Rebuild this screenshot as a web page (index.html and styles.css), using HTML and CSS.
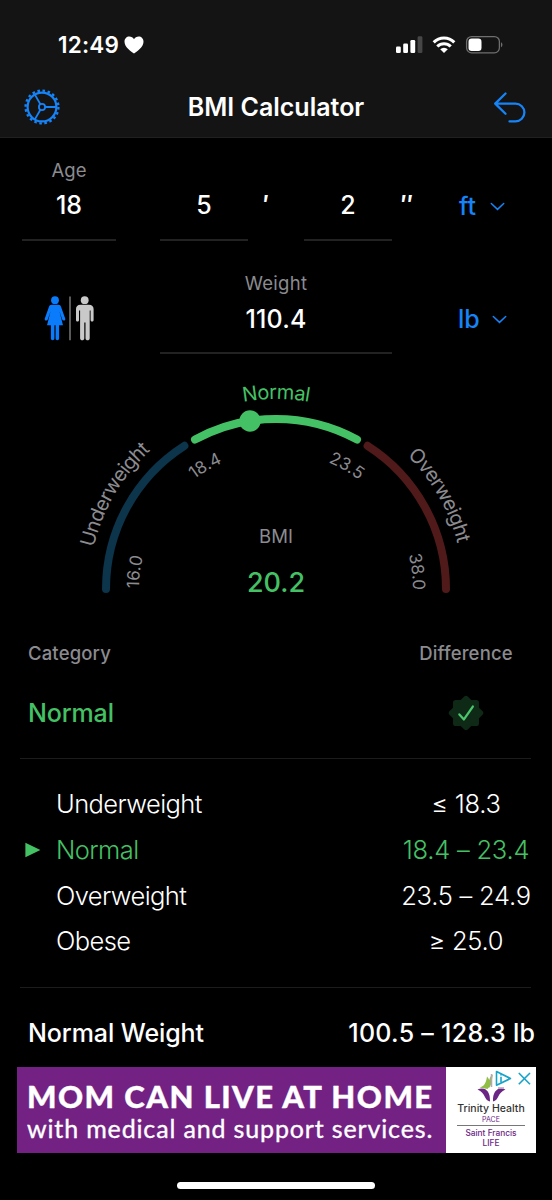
FILE: index.html
```html
<!DOCTYPE html>
<html lang="en">
<head>
<meta charset="utf-8">
<title>BMI Calculator</title>
<link rel="stylesheet" href="styles.css">
</head>
<body>
<div class="screen">
  <header class="header">
    <div class="status">
      <div class="status-left">
        <span class="time">12:49</span>
        <svg class="heart" width="20" height="18" viewBox="0 0 20 18"><path fill="#fff" d="M10 17.6C7.500 15.700 .5 11.300 .5 5.800C.5 2.600 2.700.6 5.300.6C7.300.6 9 1.600 10 3.300C11 1.600 12.700.6 14.700.6C17.300.6 19.500 2.600 19.500 5.800C19.500 11.300 12.500 15.700 10 17.600Z"/></svg>
      </div>
      <svg class="signals" width="110" height="20" viewBox="0 0 110 20">
        <g fill="#fff">
          <rect x="1" y="11.500" width="4.800" height="6.500" rx="1.300"/>
          <rect x="8.200" y="8.500" width="4.800" height="9.500" rx="1.300"/>
          <rect x="15.400" y="5" width="4.800" height="13" rx="1.300"/>
        </g>
        <rect x="22.600" y="1.300" width="4.800" height="16.700" rx="1.300" fill="#464646"/>
        <g fill="none" stroke="#fff" stroke-width="3.100">
          <path d="M38.700 7.300A14.500 14.500 0 0 1 59.300 7.300"/>
          <path d="M42.300 11.500A9.500 9.500 0 0 1 55.700 11.500"/>
        </g>
        <path fill="#fff" d="M49 18L45.200 14.200A5.400 5.400 0 0 1 52.800 14.200Z"/>
        <rect x="71.600" y="1.600" width="32.800" height="16.200" rx="5" fill="none" stroke="#6f6f6f" stroke-width="1.300"/>
        <rect x="73.500" y="3.500" width="13" height="12.500" rx="3.200" fill="#fff"/>
        <path fill="#6f6f6f" d="M106 7.200C107.900 8 107.900 11.400 106 12.200Z"/>
      </svg>
    </div>
    <div class="nav">
      <svg class="gear" width="36" height="36" viewBox="-18 -18 36 36">
        <g fill="none" stroke="#1683f7">
          <circle r="16.400" stroke-width="2.400" stroke-dasharray="2.576 2.576"/>
          <circle r="14.400" stroke-width="2.200"/>
          <circle r="3.100" stroke-width="1.800"/>
          <path stroke-width="1.800" d="M3.200 0H14M-1.600-2.800L-7-12.100M-1.600 2.800L-7 12.100"/>
        </g>
      </svg>
      <h1 class="title">BMI Calculator</h1>
      <svg class="undo" width="34" height="34" viewBox="0 0 34 34"><path fill="none" stroke="#1683f7" stroke-width="2.300" stroke-linecap="round" stroke-linejoin="round" d="M13.500 3.500L3.200 13.600L13.500 23.700M3.200 13.600H23.500A8.900 8.900 0 0 1 23.500 31.400H17.500"/></svg>
    </div>
  </header>

  <section class="height-row">
    <div class="field age"><span class="label">Age</span><span class="value">18</span></div>
    <div class="field feet"><span class="label"></span><span class="value">5</span></div>
    <span class="mark mark-feet">′</span>
    <div class="field inches"><span class="label"></span><span class="value">2</span></div>
    <span class="mark mark-inches">″</span>
    <div class="unit"><span class="unit-ft">ft</span><svg width="15" height="9" viewBox="0 0 15 9"><path d="M1.300 1.500L7.500 7.400L13.700 1.500"/></svg></div>
  </section>

  <section class="weight-row">
    <svg class="people" width="52" height="46" viewBox="0 0 52 46">
      <g fill="#0a7bfa">
        <circle cx="11" cy="4.200" r="3.900"/>
        <path d="M7.600 8.800H14.400C15.900 8.800 16.700 9.700 17.100 11L21.300 22.700C21.700 24.700 19 25.400 18.200 23.500L15.500 15.500L19 29.300H15.100V42.600C15.100 44.700 11.600 44.700 11.600 42.600V29.300H10.400V42.600C10.400 44.700 6.900 44.700 6.900 42.600V29.300H3L6.500 15.500L3.800 23.500C3 25.400.3 24.700.7 22.700L4.900 11C5.300 9.700 6.100 8.800 7.600 8.800Z"/>
      </g>
      <path stroke="#777" stroke-width="1.500" d="M26 .5V44.200"/>
      <g fill="#c9c9c9" transform="translate(-.6 0)">
        <circle cx="41.300" cy="4.200" r="3.900"/>
        <path d="M37 8.800H45.600C48.500 8.800 50.200 10.400 50.200 13V24C50.200 26 47.200 26 47.200 24V14.600H46.300V42.300C46.300 45 42.100 45 42.100 42.300V26.500H40.900V42.300C40.900 45 36.700 45 36.700 42.300V14.600H35.600V24C35.600 26 32.600 26 32.600 24V13C32.600 10.400 34.200 8.800 37 8.800Z"/>
      </g>
    </svg>
    <div class="field weight"><span class="label label-weight">Weight</span><span class="value value-weight">110.4</span></div>
    <div class="unit unit-weight"><span>lb</span><svg width="15" height="9" viewBox="0 0 15 9"><path d="M1.300 1.500L7.500 7.400L13.700 1.500"/></svg></div>
  </section>

  <svg class="gauge" width="552" height="246" viewBox="0 370 552 246">
    <defs>
      <path id="outer" d="M89 589A187 187 0 0 1 463 589"/>
      <path id="top" d="M86 589A190 190 0 0 1 466 589"/>
      <path id="inner" d="M139 589A137 137 0 0 1 413 589"/>
    </defs>
    <g class="arcs">
      <path stroke="#0c344b" d="M106 589A170 170 0 0 1 184.400 445.800"/>
      <path stroke="#501a1a" d="M367.600 445.800A170 170 0 0 1 446 589"/>
      <path stroke="#45c165" d="M195 439.500A170 170 0 0 1 357 439.500"/>
    </g>
    <circle cx="250" cy="421" r="10.700" fill="#45c165"/>
    <g class="band">
      <text class="band-side"><textPath href="#outer" startOffset="16.800%">Underweight</textPath></text>
      <text class="band-normal"><textPath href="#top" startOffset="50%">Normal</textPath></text>
      <text class="band-side"><textPath href="#outer" startOffset="83.400%">Overweight</textPath></text>
    </g>
    <g class="ticks">
      <text><textPath href="#inner" startOffset="3.900%">16.0</textPath></text>
      <text><textPath href="#inner" startOffset="33.400%">18.4</textPath></text>
      <text><textPath href="#inner" startOffset="66.600%">23.5</textPath></text>
      <text><textPath href="#inner" startOffset="96.100%">38.0</textPath></text>
    </g>
    <text class="bmi-label" x="276" y="543.300">BMI</text>
    <text class="bmi-value" x="276" y="592">20.2</text>
  </svg>

  <section class="result">
    <div class="result-row heads"><span class="cat-head">Category</span><span class="right diff-head">Difference</span></div>
    <div class="result-row verdict"><span>Normal</span>
      <span class="right"><svg width="36" height="36" viewBox="-19 -19 38 38">
        <g fill="#0f2917"><rect x="-13.700" y="-13.700" width="27.400" height="27.400" rx="3"/><rect x="-13.700" y="-13.700" width="27.400" height="27.400" rx="3" transform="rotate(45)"/></g>
        <path fill="none" stroke="#4ac66b" stroke-width="2.400" stroke-linecap="round" stroke-linejoin="round" d="M-7 1.500L-2.200 6.800L7.200-6.800"/>
      </svg></span>
    </div>
  </section>

  <ul class="ranges">
    <li><span class="name r-under">Underweight</span><span class="right">≤ 18.3</span></li>
    <li class="current"><svg class="pointer" width="16" height="16" viewBox="0 0 16 16"><path d="M.4.8L15.400 8L.4 15.200Z"/></svg><span class="name">Normal</span><span class="right">18.4 – 23.4</span></li>
    <li><span class="name">Overweight</span><span class="right">23.5 – 24.9</span></li>
    <li><span class="name">Obese</span><span class="right">≥ 25.0</span></li>
  </ul>

  <section class="normal-weight"><span class="nw-name">Normal Weight</span><span class="nw-value">100.5 – 128.3 lb</span></section>

  <aside class="ad">
    <div class="ad-copy">
      <div class="ad-title">MOM CAN LIVE AT HOME</div>
      <div class="ad-sub">with medical and support services.</div>
    </div>
    <div class="ad-brand">
      <svg width="90" height="36" viewBox="0 0 90 36">
        <path fill="#8fbd45" d="M43 21C42.500 14 43.500 9 47 7.500C45.500 12 46.500 17 43 21ZM33.500 20.500C38 19.500 40 16.500 41 9.500C45 14 45 19 41.500 22Z"/>
        <path fill="#6b2585" d="M31.500 22.500C39 19.500 44.500 24 44 34.500C38 33.500 40 26 31.500 22.500ZM59.500 22.500C52 19.500 46.500 24 47 34.500C53 33.500 51 26 59.500 22.500Z"/>
        <path fill="none" stroke="#b6a5bd" stroke-width="1.500" d="M45.500 7V20M52 21H58"/>
        <g fill="#fff" stroke="#15a3cb" stroke-width="1.600" stroke-linejoin="round">
          <path d="M50.500 4.500V18.300L64.500 11.500Z"/>
          <path d="M55 9.800V15.500M55 7.300V8.500M72.800 6L84 17.200M84 6L72.800 17.200"/>
        </g>
      </svg>
      <div class="brand-name">Trinity Health</div>
      <div class="brand-pace">PACE</div>
      <div class="brand-rule"></div>
      <div class="brand-sub">Saint Francis</div>
      <div class="brand-sub brand-life">LIFE</div>
    </div>
  </aside>
  <div class="home-bar"></div>
</div>
</body>
</html>
```
FILE: styles.css
```css
* { box-sizing: border-box; }
body { margin: 0; background: #000; }
svg { display: block; flex: none; }
.screen {
  width: 552px; height: 1200px; background: #000; color: #fff;
  font-family: Inter, "Liberation Sans", sans-serif;
  font-size: 25px; white-space: nowrap; overflow: hidden;
  display: flex; flex-direction: column;
}
.header { height: 138px; flex: none; background: #141414; border-bottom: 1px solid #202020; padding-top: 30px; }
.status { height: 30px; display: flex; align-items: center; justify-content: space-between; padding: 0 47px 0 58px; }
.status-left { display: flex; align-items: center; gap: 5px; }
.time { font-size: 22.500px; font-weight: 600; line-height: 30px; letter-spacing: 0.200px; }
.nav { height: 94px; display: flex; align-items: center; justify-content: space-between; padding: 0 26px 0 24px; }
.title { margin: 0; font-size: 25px; font-weight: 600; line-height: 30px; letter-spacing: 0; }

.height-row { height: 103px; flex: none; display: flex; padding: 17px 0 0 22px; }
.field { display: flex; flex-direction: column; align-items: center; height: 86px; border-bottom: 2px solid #222; }
.label { height: 30px; line-height: 30px; font-size: 18.500px; color: #8b8b90; }
.label-weight { letter-spacing: 0.250px; }
.value { height: 40px; line-height: 40px; font-weight: 500; }
.value-weight { line-height: 42px; letter-spacing: 0.200px; }
.age { width: 94px; }
.feet { width: 88px; margin-left: 44px; }
.inches { width: 88px; margin-left: 20px; }
.mark { line-height: 40px; padding-top: 30px; text-align: center; font-weight: 600; }
.mark-feet { width: 36px; }
.mark-inches { width: 30px; }
.unit { display: flex; align-items: center; gap: 14px; height: 40px; margin: 31px 0 0 37px; color: #1683f7; font-weight: 500; }
.unit path { fill: none; stroke: #1683f7; stroke-width: 1.500; stroke-linecap: round; }

.weight-row { height: 129px; flex: none; display: flex; padding: 27px 0 0 44px; }
.people { margin-top: 28px; }
.weight { width: 232px; margin-left: 64px; }
.unit-weight { margin-left: 66px; gap: 12px; }

.gauge { font-family: Inter, sans-serif; }
.gauge text { text-anchor: middle; }
.arcs path { fill: none; stroke-width: 8; stroke-linecap: round; }
.band { font-size: 20px; letter-spacing: -0.450px; fill: #8b8b90; }
.band-side { letter-spacing: -0.700px; }
.band .band-normal { fill: #45c165; }
.ticks { font-size: 17px; fill: #8b8b90; }
.bmi-label { font-size: 18.500px; fill: #8b8b90; }
.bmi-value { font-size: 27px; font-weight: 500; fill: #45c165; }

.result { height: 142.500px; flex: none; margin: 0 21px 0 20px; padding: 22px 0 0 8px; border-bottom: 1px solid #1c1c1c; }
.result-row, .ranges li { display: flex; align-items: center; justify-content: space-between; }
.right { width: 130px; display: flex; justify-content: center; }
.heads { height: 30px; font-size: 18.500px; font-weight: 500; color: #8b8b90; letter-spacing: 0.150px; }
.verdict { height: 89px; color: #45c165; font-weight: 500; letter-spacing: -0.150px; }

.ranges { list-style: none; margin: 0 21px 0 20px; padding: 22.500px 0 0 36px; height: 229px; flex: none; border-bottom: 1px solid #1c1c1c; font-weight: 300; font-size: 25.500px; letter-spacing: -0.600px; }
.ranges li { height: 45.700px; }
.ranges .right { letter-spacing: -0.250px; }
.current { color: #45c165; }
.pointer { margin: 0 14px 0 -31px; }
.pointer path { fill: #45c165; }
.name { margin-right: auto; }
.current .name { margin-left: 1px; }

.normal-weight { height: 79.500px; flex: none; display: flex; align-items: center; justify-content: space-between; padding: 11px 17px 0 28px; font-weight: 500; line-height: 30px; }
.nw-name { letter-spacing: -0.100px; }
.nw-value { letter-spacing: 0.280px; margin-right: -0.300px; }

.ad { width: 519px; height: 86px; flex: none; margin-left: 17px; display: flex; background: #fff; }
.ad-copy { width: 429px; background: #732283; padding: 11px 0 0 10px; font-family: Lato, sans-serif; }
.ad-title { font-size: 31px; font-weight: 900; line-height: 36px; letter-spacing: 1.450px; -webkit-text-stroke: 0.400px #fff; }
.ad-sub { font-size: 25px; line-height: 28px; letter-spacing: 0.850px; -webkit-text-stroke: 0.350px #fff; }
.ad-brand { width: 90px; color: #6b2585; font-family: Inter, sans-serif; text-align: center; }
.brand-name { color: #333; font-size: 10.500px; font-weight: 500; line-height: 12px; }
.brand-pace { font-size: 7px; line-height: 9px; }
.brand-rule { height: 1px; background: #777; margin: 1px 11px 0; }
.brand-sub { font-size: 8.300px; font-weight: 500; line-height: 10px; margin-top: 2px; }
.brand-life { margin-top: 0; }
.home-bar { width: 198px; height: 7px; flex: none; border-radius: 4px; background: #fff; margin: 29px 0 0 177px; }
```
